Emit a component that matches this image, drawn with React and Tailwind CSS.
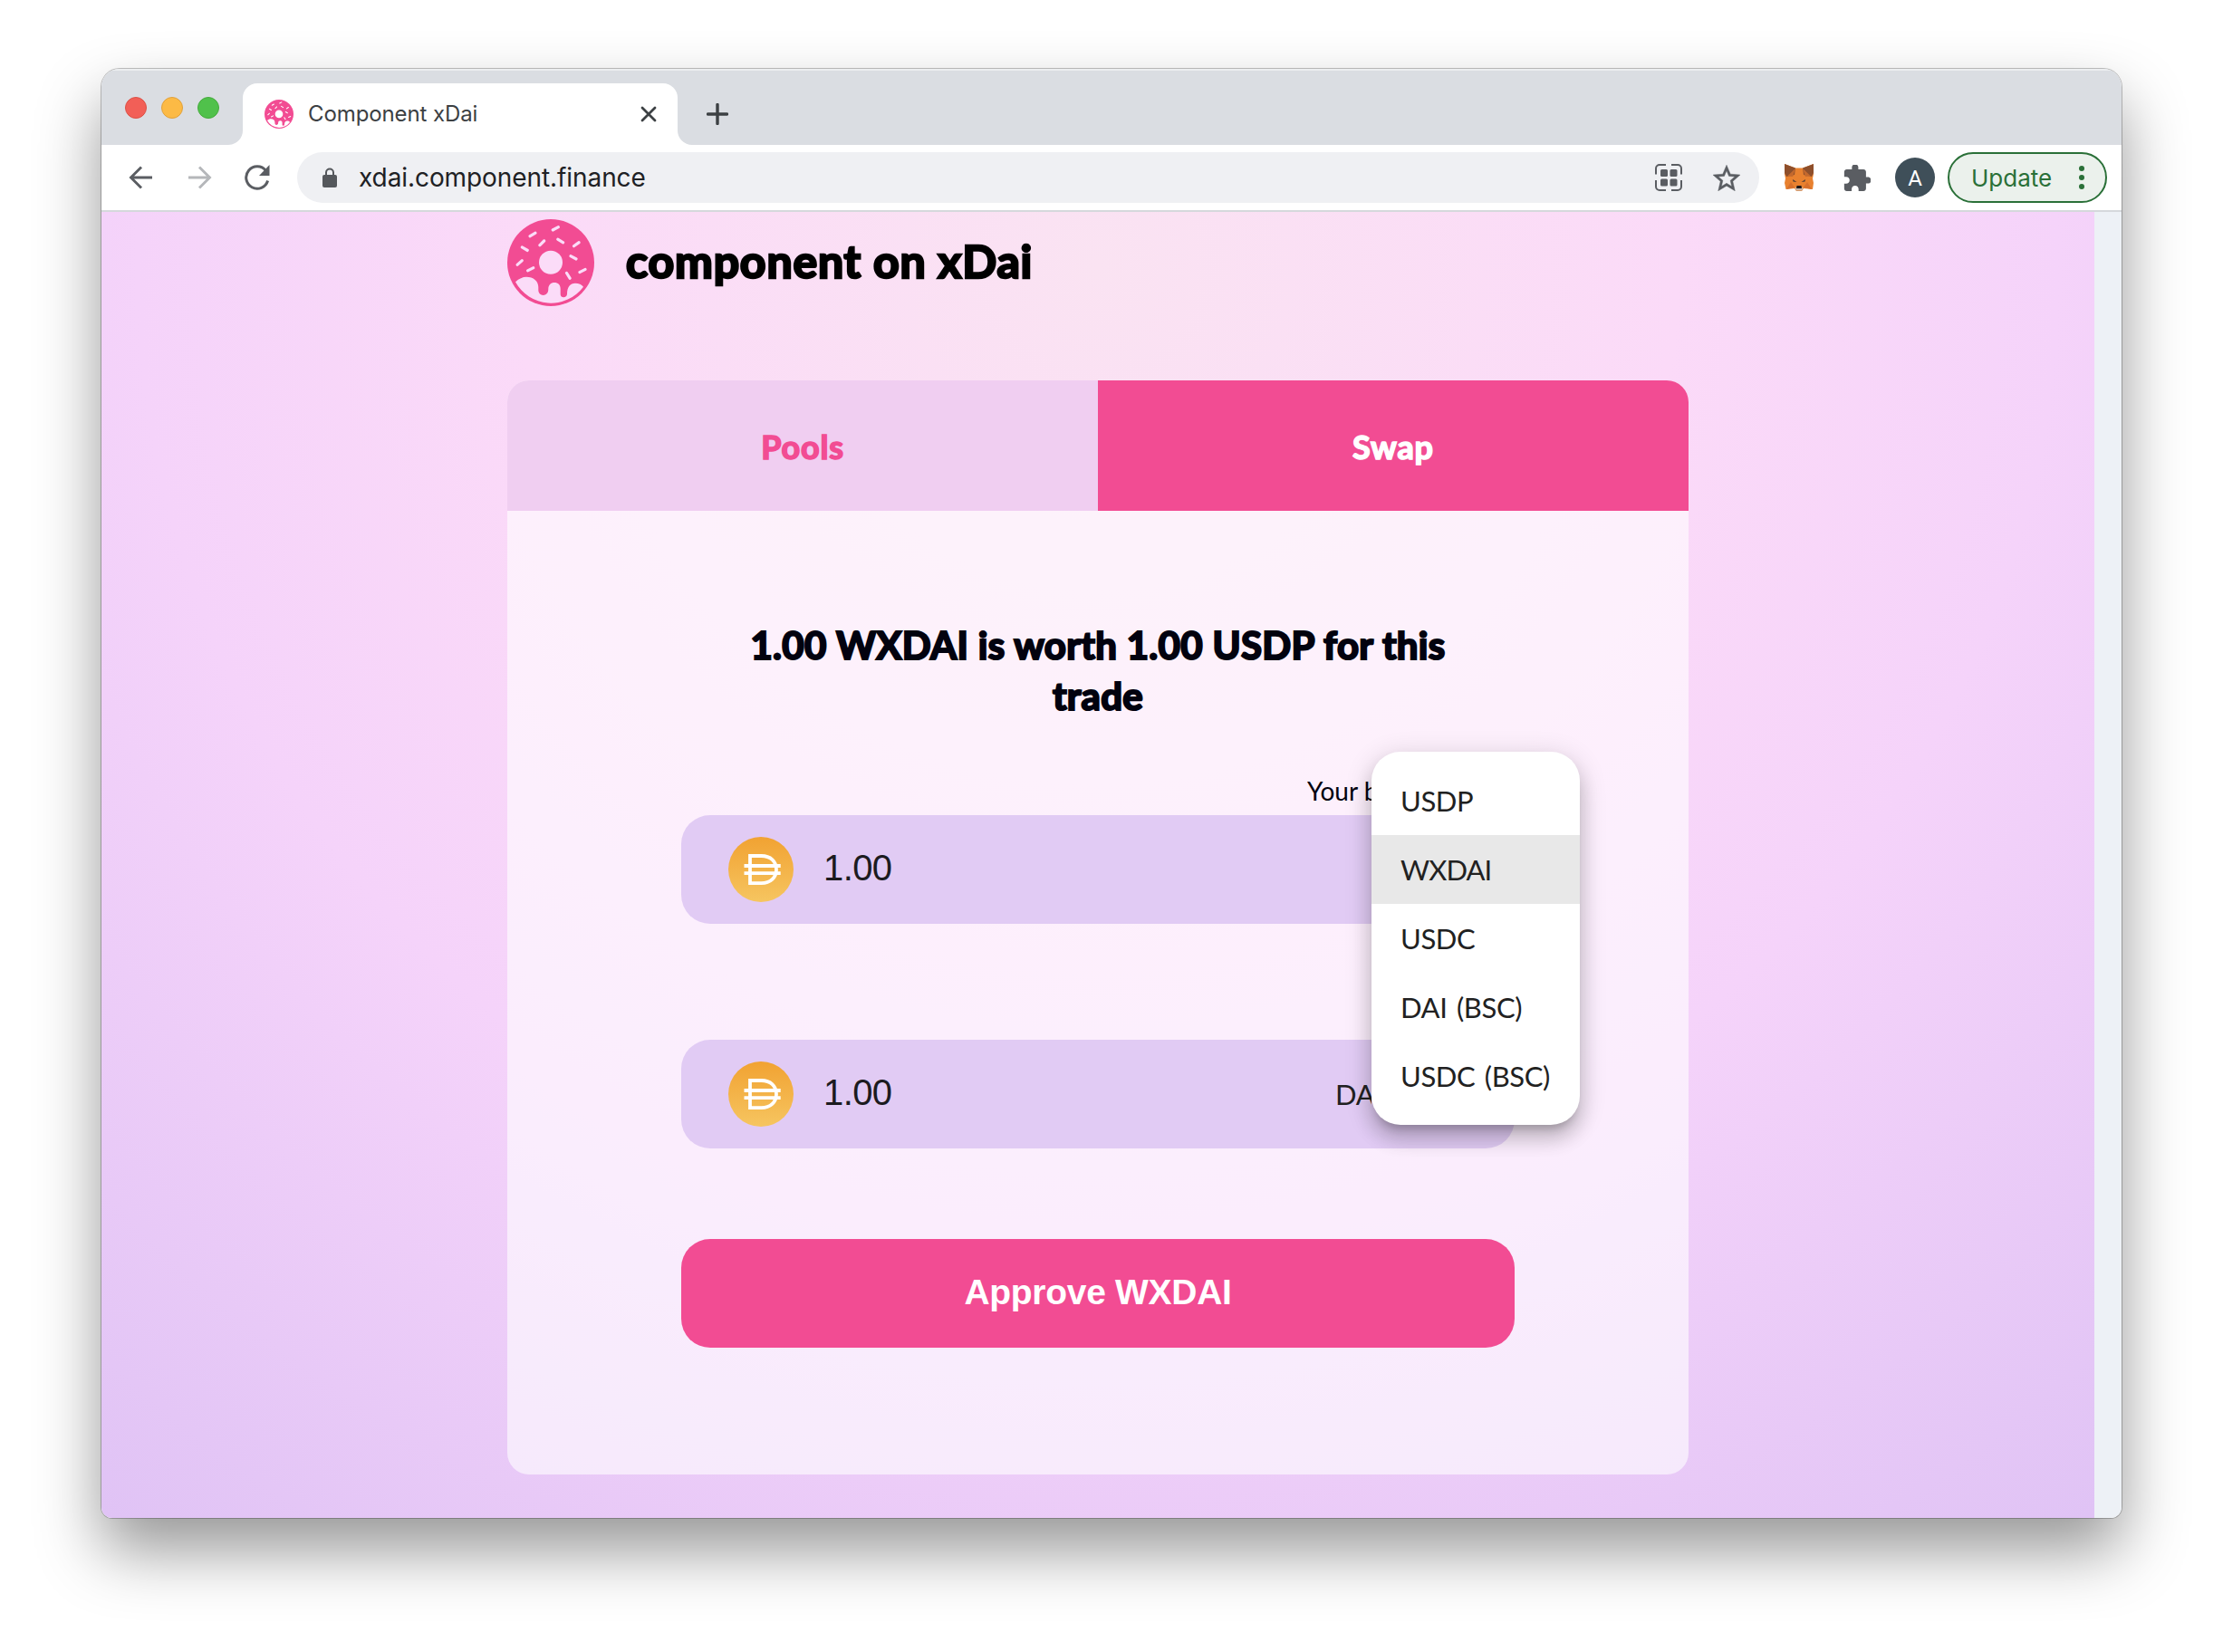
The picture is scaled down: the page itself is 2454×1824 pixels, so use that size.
const sprinkles = [
  [53.3, 10.3, -28], [28, 17, -30], [38.3, 26.3, -45], [58.7, 24, 32], [76.3, 27.7, -36], [19.3, 32.7, 30],
  [73, 42.3, 28], [13.7, 48, -42], [25.7, 55.3, -27], [83, 57, -27], [67.3, 62.3, 58],
];

function Donut({ className, cut }) {
  return (
    <svg viewBox="0 0 96 96" className={className}>
      <circle cx="48" cy="48" r="48" fill="#f24c93" />
      <g fill={cut}>
        <circle cx="48" cy="47.8" r="13" />
        {sprinkles.map(([x, y, a]) => (
          <rect key={x} x={x - 5} y={y - 1.6} width="10" height="3.2" rx="1.4" transform={`rotate(${a} ${x} ${y})`} />
        ))}
        <path d="M9 69.3C13 65.500 17 63.700 21 63.700C29 63.700 34.300 68.500 34.300 75V78C34.300 86 45.300 86 45.300 77.500C45.300 72.500 48 70 52 70C56 70 58.700 72.500 58.700 77V83C58.700 87.500 66 87.500 66 82.500C66 75 69.500 70.700 75 70.700C79 70.700 82 72.300 84 74.700A44.600 44.600 0 0 1 9 69.300Z" />
      </g>
    </svg>
  );
}

function DaiIcon() {
  return (
    <svg viewBox="0 0 72 72" className="size-18 shrink-0">
      <defs>
        <linearGradient id="dai" x1="0" y1="0" x2="0" y2="1">
          <stop offset="0" stopColor="#f1a232" />
          <stop offset="1" stopColor="#f6c560" />
        </linearGradient>
      </defs>
      <circle cx="36" cy="36" r="36" fill="url(#dai)" />
      <g fill="none" stroke="#fff" strokeWidth="3.8">
        <path d="M24 21H36.500C46.500 21 53 27 53 36S46.500 51.200 36.500 51.200H24Z" />
        <path d="M17.500 32H57.700M17.500 40.200H57.700" />
      </g>
    </svg>
  );
}

function TokenField({ children }) {
  return (
    <div className="flex h-30 items-center rounded-[32px] bg-[#e1cbf4] pl-13 pr-[158px]">
      <DaiIcon />
      <span className="ml-[33px] pb-1 font-['Liberation_Sans',sans-serif] text-[40px] leading-none tracking-[-0.6px] text-[#1c1b1f]">1.00</span>
      {children}
    </div>
  );
}

function Tab() {
  return (
    <div className="relative ml-[26px] flex h-17 w-[480px] items-center self-end rounded-t-2xl bg-white pl-6 pr-[23px]">
      <svg viewBox="0 0 16 16" className="absolute bottom-0 -left-4 size-4"><path d="M16 0V16H0A16 16 0 0 0 16 0Z" fill="#fff" /></svg>
      <svg viewBox="0 0 16 16" className="absolute bottom-0 -right-4 size-4"><path d="M0 0V16H16A16 16 0 0 1 0 0Z" fill="#fff" /></svg>
      <Donut className="size-8" cut="#fff" />
      <span className="ml-4 grow text-2xl tracking-[-0.1px] text-[#3c4043]">Component xDai</span>
      <svg viewBox="0 0 18 18" className="size-[18px]"><path d="M2 2L16 16M16 2L2 16" stroke="#3c4043" strokeWidth="2.800" strokeLinecap="round" /></svg>
    </div>
  );
}

function TabStrip() {
  return (
    <div className="flex h-21 items-center bg-[#dadde2] pl-[26px] shadow-[inset_0_2px_0_#eceef0]">
      <div className="flex gap-4 pt-0.5">
        <i className="size-6 rounded-full border border-[#dc5146] bg-[#f25f57]" />
        <i className="size-6 rounded-full border border-[#e0a13b] bg-[#fcba45]" />
        <i className="size-6 rounded-full border border-[#45ab3c] bg-[#50c14b]" />
      </div>
      <Tab />
      <svg viewBox="0 0 24 24" className="ml-8 mt-4 size-6"><path d="M12 1.500V22.500M1.500 12H22.500" stroke="#3c4043" strokeWidth="3.400" strokeLinecap="round" /></svg>
    </div>
  );
}

function Fox() {
  return (
    <svg viewBox="0 0 32 30" className="ml-7 h-[30px] w-8">
      <path d="M0 0L12 4.500H20L32 0V11L31 16L32 21L31 28L21 27L19 30H13L11 27L1.500 28L0 21L1 16L0 11Z" fill="#e8812f" />
      <path d="M0 0L12 4.500L11 12L2 14L0 10ZM32 0L20 4.500L21 12L30 14L32 10Z" fill="#8e4f2b" />
      <path d="M3 13.500L12 5L9 14ZM29 13.500L20 5L23 14Z" fill="#c4692d" />
      <path d="M9 17L13.500 20L9.500 19.500ZM23 17L18.500 20L22.500 19.500Z" fill="#4b3a35" />
      <path d="M7 20L11 26L2 28ZM25 20L21 26L30 28Z" fill="#d66f2c" />
      <path d="M11.500 26.500L13 29.500H19L20.500 26.500L18 25H14Z" fill="#c9b7aa" />
      <path d="M13.500 24H18.500L19 27H13Z" fill="#1c1718" />
    </svg>
  );
}

function Toolbar() {
  return (
    <div className="flex h-[74px] items-center border-b-2 border-[#d5d8dc] bg-white pl-[30px] pr-4">
      <svg viewBox="0 0 28 26" className="h-[26px] w-7"><path d="M26 13H3M14 1.500L2.500 13L14 24.500" fill="none" stroke="#5a5d62" strokeWidth="2.900" /></svg>
      <svg viewBox="0 0 28 26" className="ml-9 h-[26px] w-7"><path d="M2 13H25M14 1.500L25.500 13L14 24.500" fill="none" stroke="#b5b7ba" strokeWidth="2.900" /></svg>
      <svg viewBox="0 0 28 28" className="ml-9 size-7">
        <path d="M23.500 6.500A12.200 12.200 0 1 0 25.600 17.500" fill="none" stroke="#5a5d62" strokeWidth="3" />
        <path d="M27.500 0V12H16Z" fill="#5a5d62" />
      </svg>
      <div className="ml-[30px] flex h-14 w-[1614px] items-center rounded-full bg-[#eff0f3] pl-7 pr-[21px]">
        <svg viewBox="0 0 16 22" className="h-[22px] w-4">
          <rect x="0" y="8" width="16" height="14" rx="2" fill="#55585c" />
          <path d="M4 9V5.500A4 4 0 0 1 12 5.500V9" fill="none" stroke="#55585c" strokeWidth="2" />
        </svg>
        <span className="ml-6 grow text-[28px] tracking-[-0.08px] text-[#202124]">xdai.component.finance</span>
        <svg viewBox="0 0 30 30" className="size-[30px]">
          <path d="M1 11.500V5A4 4 0 0 1 5 1H12M18 1H25A4 4 0 0 1 29 5V11.500M29 18V25A4 4 0 0 1 25 29H18M12 29H5A4 4 0 0 1 1 25V18" fill="none" stroke="#5a5d62" strokeWidth="2" />
          <g fill="#5a5d62">
            <rect x="6" y="6" width="8" height="8" rx="1.500" /><rect x="16.500" y="6" width="8" height="8" rx="1.500" />
            <rect x="6" y="16.500" width="8" height="8" rx="1.500" /><rect x="16.500" y="16.500" width="8" height="8" rx="1.500" />
          </g>
        </svg>
        <svg viewBox="2 2 20 19" className="ml-[34px] h-[29px] w-[30px]">
          <path fill="#5a5d62" stroke="#5a5d62" strokeWidth="0.300" d="M22 9.240l-7.190-.62L12 2 9.190 8.630 2 9.240l5.460 4.730L5.820 21 12 17.270 18.180 21l-1.630-7.030L22 9.240zM12 15.400l-3.760 2.270 1-4.280-3.320-2.880 4.380-.38L12 6.100l1.710 4.040 4.380.38-3.320 2.880 1 4.280L12 15.400z" />
        </svg>
      </div>
      <Fox />
      <svg viewBox="1.500 1.500 21 20.500" className="ml-[33px] h-[29px] w-[30px]">
        <path fill="#5a5d62" d="M20.500 11H19V7c0-1.100-.9-2-2-2h-4V3.500C13 2.120 11.880 1 10.500 1S8 2.120 8 3.500V5H4c-1.100 0-1.990.9-1.990 2v3.800H3.500c1.490 0 2.700 1.210 2.700 2.700s-1.210 2.700-2.700 2.700H2V20c0 1.100.9 2 2 2h3.800v-1.500c0-1.490 1.210-2.700 2.700-2.700 1.490 0 2.700 1.210 2.700 2.700V22H17c1.100 0 2-.9 2-2v-4h1.500c1.380 0 2.500-1.120 2.500-2.500S21.880 11 20.500 11z" />
      </svg>
      <div className="ml-[27px] flex size-11 items-center justify-center rounded-full bg-[#3f4f59] pt-0.5 font-['Roboto',sans-serif] text-2xl text-white">A</div>
      <div className="ml-3.5 flex h-14 w-44 items-center justify-between rounded-full border-2 border-[#2a7038] bg-[#ebf1ec] pl-6 pr-[23px] text-[26px] text-[#2a7038]">
        Update
        <span className="flex flex-col gap-1">
          <i className="size-1.5 rounded-full bg-[#2a7038]" />
          <i className="size-1.5 rounded-full bg-[#2a7038]" />
          <i className="size-1.5 rounded-full bg-[#2a7038]" />
        </span>
      </div>
    </div>
  );
}

const options = ["USDP", "WXDAI", "USDC", "DAI (BSC)", "USDC (BSC)"];

function TokenMenu() {
  return (
    <ul className="absolute top-[-22px] left-[762px] w-[230px] overflow-hidden rounded-[32px] bg-white py-4 text-[31px] tracking-[-0.4px] [word-spacing:3px] whitespace-nowrap text-[#212121] shadow-[0_10px_10px_-6px_rgba(0,0,0,0.2),0_16px_20px_2px_rgba(0,0,0,0.14),0_6px_28px_4px_rgba(0,0,0,0.12)]">
      {options.map((o) => (
        <li key={o} className={o === "WXDAI" ? "flex h-19 items-center bg-[#e8e8e8] pl-8 tracking-[-0.9px]" : "flex h-19 items-center pl-8"}>{o}</li>
      ))}
    </ul>
  );
}

export default function App() {
  return (
    <div className="h-[1824px] w-[2454px] overflow-hidden bg-white pt-[76px] pl-28">
      <div className="h-[1600px] w-[2230px] rounded-[20px] rounded-b-xl shadow-[0_36px_70px_rgba(0,0,0,0.41),0_0_0_1px_rgba(0,0,0,0.24)]">
        <div className="flex h-full flex-col overflow-hidden rounded-[20px] rounded-b-xl font-['Inter',sans-serif]">
          <TabStrip />
          <Toolbar />
          <div className="flex grow bg-[#edf1f6] pr-[30px]">
            <main className="w-[2200px] bg-[radial-gradient(circle_at_1100px_60px,#fae3f2_0px,#fbdaf8_640px,#f5d3fa_1060px,#e0c3f5_1760px)] pt-2 pl-[448px] font-['Lato',sans-serif]">
              <header className="flex h-24 items-center">
                <Donut className="size-24" cut="#fbdcf8" />
                <h1 className="ml-[35px] pb-1 text-[50px] leading-none font-bold tracking-[0.8px] text-black [-webkit-text-stroke:2.600px_black]">component on xDai</h1>
              </header>
              <section className="mt-[82px] h-[1208px] w-[1304px] overflow-hidden rounded-3xl bg-white/60">
                <nav className="flex h-36 text-4xl font-bold tracking-[0.8px]">
                  <a className="flex flex-1 items-center justify-center bg-[#f0cef1] pt-0.5 text-[#f24c93] [-webkit-text-stroke:1.600px_#f24c93]">Pools</a>
                  <a className="flex flex-1 items-center justify-center bg-[#f24c93] pt-0.5 text-white [-webkit-text-stroke:1.600px_white]">Swap</a>
                </nav>
                <div className="px-48 pt-[120px]">
                  <h2 className="px-16 text-center text-[42px] leading-14 font-bold tracking-[0.3px] text-[#02020f] [-webkit-text-stroke:2.200px_#02020f]">1.00 WXDAI is worth 1.00 USDP for this trade</h2>
                  <div className="relative mt-14">
                    <p className="ml-[691px] flex h-10 w-[71px] items-center overflow-hidden pt-0.5 text-[28px] leading-none whitespace-nowrap text-[#02020f]">Your b</p>
                    <div className="pt-2"><TokenField /></div>
                    <div className="mt-32">
                      <TokenField>
                        <span className="ml-auto w-10 overflow-hidden text-[31px] leading-10 tracking-[-0.3px] whitespace-nowrap text-[#212121]">DA</span>
                      </TokenField>
                    </div>
                    <TokenMenu />
                  </div>
                  <button className="mt-25 h-30 w-full rounded-[32px] bg-[#f24c93] pb-0.5 font-['Liberation_Sans',sans-serif] text-[39px] font-bold tracking-[-0.3px] text-white">Approve WXDAI</button>
                </div>
              </section>
            </main>
          </div>
        </div>
      </div>
    </div>
  );
}
